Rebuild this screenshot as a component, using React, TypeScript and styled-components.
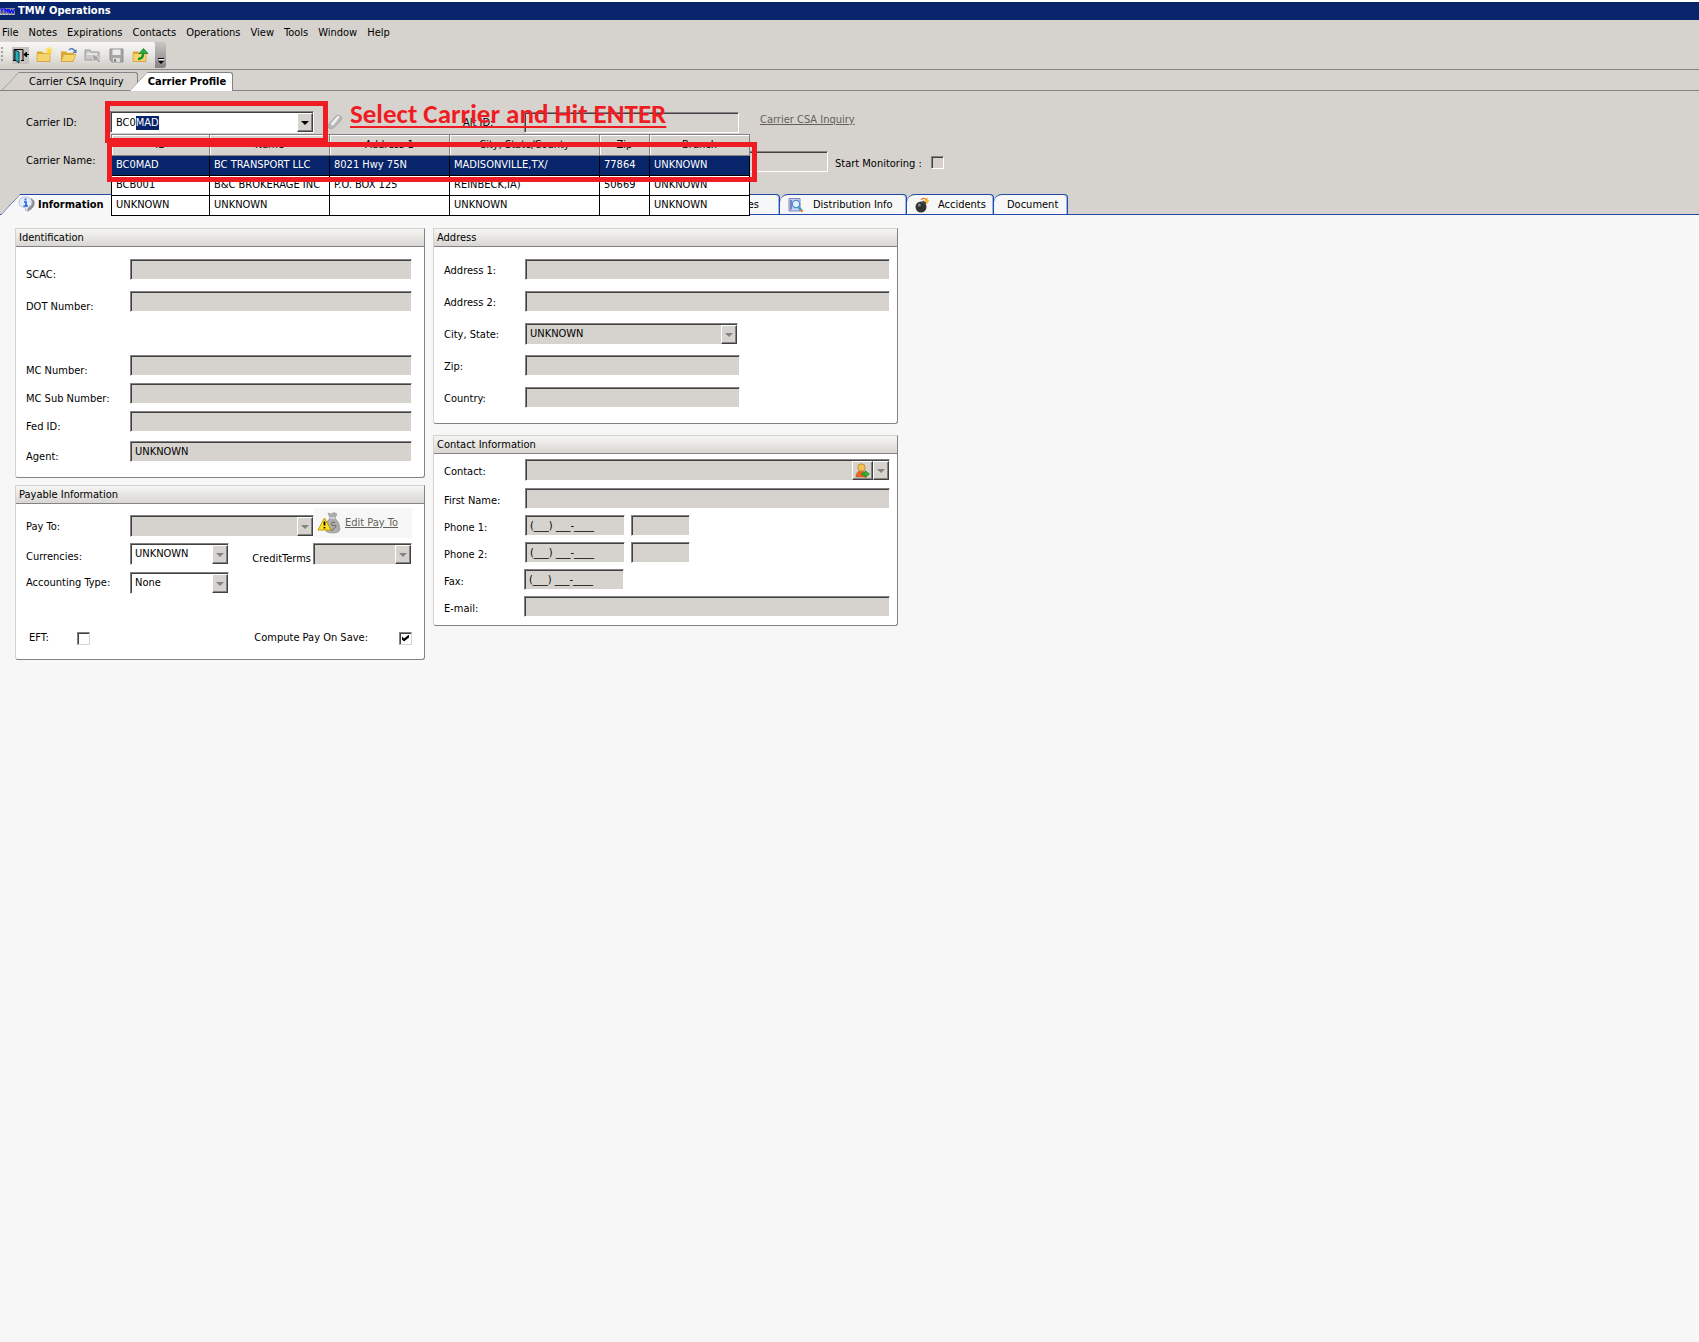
import React, { useEffect, useRef } from 'react';
import styled, { createGlobalStyle, css } from 'styled-components';

const color = {
  face: '#d6d3ce',
  page: '#f7f7f7',
  navy: '#08246b',
  shadow: '#848284',
  dark: '#424142',
  red: '#ef1c23',
  blue: '#2149a5',
};

const GlobalStyle = createGlobalStyle`
  * { box-sizing: border-box; }
  html { background: ${color.page}; }
  body {
    margin: 0;
    background: ${color.page};
    color: #000;
    font: 11px/14px "DejaVu Sans Condensed", "DejaVu Sans", Tahoma, sans-serif;
  }
  button, input, select { font: inherit; color: inherit; margin: 0; }
`;

const Shell = styled.div`
  display: flex;
  flex-direction: column;
  min-height: 100vh;
`;

const TitleBar = styled.header`
  display: flex;
  align-items: center;
  gap: 3px;
  height: 20px;
  border-top: 2px solid #fff;
  background: ${color.navy};
  color: #fff;
  font-weight: bold;
`;

const MenuBar = styled.nav`
  display: flex;
  align-items: center;
  gap: 10px;
  height: 22px;
  padding: 4px 0 0 2px;
  background: ${color.face};
`;

const MenuItem = styled.button`
  padding: 0;
  border: 0;
  background: none;
`;

const ToolBar = styled.div`
  display: flex;
  height: 28px;
  border-bottom: 1px solid ${color.shadow};
  background: ${color.face};
`;

const ToolStrip = styled.div`
  display: flex;
  align-items: center;
  gap: 4px;
  height: 26px;
  padding: 0 5px 0 1px;
  border-radius: 0 3px 0 0;
  background: linear-gradient(#f7f7f5, #e8e6e2 50%, #d0cdc6);
`;

const Grip = styled.span`
  width: 2px;
  height: 16px;
  margin-right: 3px;
  background: repeating-linear-gradient(#a5a29c 0 2px, transparent 2px 4px);
`;

const ToolButton = styled.button`
  display: grid;
  place-items: center;
  width: 20px;
  height: 20px;
  padding: 0;
  border: 0;
  background: none;
`;

const Overflow = styled.button`
  display: flex;
  align-items: flex-end;
  justify-content: center;
  width: 11px;
  height: 26px;
  padding: 0 0 3px;
  border: 0;
  border-radius: 0 3px 3px 0;
  background: linear-gradient(#c8c6c2, #848284);
`;

const DocTabs = styled.div`
  display: flex;
  align-items: flex-end;
  height: 21px;
  background: linear-gradient(${color.shadow}, ${color.shadow}) bottom / 100% 1px no-repeat ${color.face};
`;

const SlantTab = styled.button<{ $line: string; $fill: string; $active?: boolean }>`
  position: relative;
  isolation: isolate;
  display: flex;
  align-items: center;
  gap: 3px;
  height: 19px;
  padding: 1px 14px 0 29px;
  border: 0;
  background: none;
  white-space: nowrap;
  font-weight: ${p => (p.$active ? 'bold' : 'normal')};
  & + & { margin-left: -10px; padding: 1px 7px 0 20px; }

  &::before, &::after {
    content: "";
    position: absolute;
    z-index: -1;
    top: 0;
    bottom: ${p => (p.$active ? 0 : 1)}px;
    border-top: 1px solid ${p => p.$line};
    background: ${p => p.$fill};
  }
  &::before {
    left: 10px;
    width: 20px;
    border-left: 1px solid ${p => p.$line};
    border-top-left-radius: 2px;
    transform: skewX(-43deg);
  }
  &::after {
    left: 20px;
    right: 0;
    border-right: 1px solid ${p => p.$line};
    border-top-right-radius: 3px;
  }
`;

const InfoTab = styled(SlantTab)`
  width: 124px;
  height: 21px;
  padding: 0 0 0 18px;
`;

const Header = styled.section`
  position: relative;
  padding-top: 20px;
  background: ${color.face};
`;

const HeaderRow = styled.div<{ $align?: string }>`
  display: flex;
  align-items: ${p => p.$align || 'center'};
  padding-left: 26px;
  & + & { margin-top: 18px; }
`;

const HeaderLabel = styled.label`
  flex: none;
  width: 84px;
  padding-top: 2px;
  line-height: 16px;
`;

const AltLabel = styled.label`
  width: 61px;
  margin-left: 120px;
  padding-top: 2px;
  line-height: 16px;
`;

const sunken = css`
  border: 1px solid;
  border-color: ${color.shadow} #fff #fff ${color.shadow};
  border-radius: 0;
  box-shadow: inset 1px 1px ${color.dark};
  outline: none;
`;

const TextBox = styled.input<{ $w?: string }>`
  ${sunken}
  display: block;
  width: ${p => p.$w || '100%'};
  height: 21px;
  padding: 0 5px 1px 4px;
  background: ${color.face};
`;

const HeaderLink = styled.a`
  align-self: flex-start;
  margin-left: 21px;
  color: #63615a;
  line-height: 18px;
`;

const HeaderMonitor = styled.label`
  width: 96px;
  margin-left: 7px;
  padding-top: 5px;
  line-height: 16px;
  white-space: nowrap;
`;

const Combo = styled.div<{ $w?: string; $white?: boolean }>`
  ${sunken}
  display: flex;
  flex: none;
  width: ${p => p.$w || '100%'};
  height: 22px;
  padding: 1px 0 0 1px;
  background: ${p => (p.$white ? '#fff' : color.face)};
`;

const ComboInput = styled.input`
  flex: 1;
  min-width: 0;
  padding: 0 0 0 4px;
  border: 0;
  outline: 0;
  background: none;
  &::selection { background: ${color.navy}; color: #fff; }
`;

const ComboSelect = styled.select`
  appearance: none;
  flex: 1;
  min-width: 0;
  padding: 0 0 1px 3px;
  border: 0;
  background: none;
`;

const DropButton = styled.button<{ $w?: number }>`
  display: grid;
  place-items: center;
  width: ${p => p.$w || 16}px;
  padding: 0;
  border: 1px solid;
  border-color: #fff ${color.dark} ${color.dark} #fff;
  background: ${color.face};
  box-shadow: inset -1px -1px ${color.shadow};
`;

const Arrow = styled.span<{ $off?: boolean }>`
  border: 4px solid transparent;
  border-top-color: ${p => (p.$off ? color.shadow : '#000')};
  border-bottom: 0;
`;

const Eraser = styled.button`
  width: 16px;
  height: 16px;
  margin-left: 13px;
  padding: 0;
  border: 0;
  background: none;
`;

const DropList = styled.table`
  position: absolute;
  z-index: 2;
  top: 43px;
  left: 111px;
  width: 638px;
  border-collapse: collapse;
  table-layout: fixed;
  background: #fff;
  border: 1px solid #000;
  th, td {
    height: 20px;
    padding: 0 0 2px 4px;
    border: 1px solid #000;
    font-weight: normal;
    text-align: left;
    white-space: nowrap;
    overflow: hidden;
  }
  th {
    padding: 0;
    height: 21px;
    background: ${color.face};
    border-color: ${color.shadow};
    box-shadow: inset 1px 1px #fff;
    text-align: center;
  }
`;

const ListRow = styled.tr<{ $selected?: boolean }>`
  background: ${p => (p.$selected ? color.navy : '#fff')};
  color: ${p => (p.$selected ? '#fff' : '#000')};
`;

const RedBox = styled.div<{ $x: number; $y: number; $w: number; $h: number }>`
  position: absolute;
  z-index: 3;
  left: ${p => p.$x}px;
  top: ${p => p.$y}px;
  width: ${p => p.$w}px;
  height: ${p => p.$h}px;
  border: 5px solid ${color.red};
  pointer-events: none;
`;

const RedNote = styled.div`
  position: absolute;
  z-index: 3;
  left: 350px;
  top: 8px;
  color: ${color.red};
  font: bold 27px/30px Carlito, Lato, sans-serif;
  text-decoration: underline;
  text-decoration-thickness: 2px;
  text-underline-offset: 3px;
  white-space: nowrap;
  pointer-events: none;
`;

const PageTabs = styled.div`
  display: flex;
  height: 21px;
  margin-top: 22px;
  background: linear-gradient(${color.blue}, ${color.blue}) bottom / 100% 1px no-repeat;
`;

const PageTab = styled.button<{ $w: number; $pad?: number; $end?: boolean }>`
  display: flex;
  align-items: center;
  justify-content: ${p => (p.$end ? 'flex-end' : 'flex-start')};
  gap: 9px;
  width: ${p => p.$w}px;
  padding: 0 ${p => (p.$end ? 20 : 0)}px 0 ${p => p.$pad || 8}px;
  border: 1px solid ${color.blue};
  border-left-width: 0;
  border-radius: 8px 4px 0 0;
  background: ${color.page};
  box-shadow: inset -1px 0 #9cb6ef;
  white-space: nowrap;
`;

const Body = styled.main`
  display: grid;
  grid-template-columns: 410px 465px;
  align-items: start;
  gap: 8px;
  padding: 13px 15px;
`;

const Column = styled.div<{ $gap: number }>`
  display: grid;
  gap: ${p => p.$gap}px;
`;

const Panel = styled.fieldset<{ $pad: number }>`
  min-width: 0;
  margin: 0;
  padding: 0 0 ${p => p.$pad}px;
  border: 1px solid;
  border-color: ${color.face} ${color.shadow} ${color.shadow} ${color.face};
  border-radius: 0 0 3px 3px;
  background: #fff;
`;

const PanelTitle = styled.legend`
  float: left;
  width: 100%;
  height: 18px;
  padding: 0 3px;
  border-bottom: 1px solid ${color.shadow};
  background: linear-gradient(#f5f5f3, #d9d7d3);
  line-height: 17px;
`;

const Rows = styled.div<{ $top: number; $side: number }>`
  clear: both;
  padding: ${p => p.$top}px ${p => p.$side}px 0 10px;
`;

const Row = styled.div<{ $h: number; $label: number }>`
  display: grid;
  grid-template-columns: ${p => p.$label}px 1fr;
  height: ${p => p.$h}px;
`;

const Label = styled.label<{ $drop: number }>`
  padding-top: ${p => p.$drop}px;
  white-space: nowrap;
`;

const Cells = styled.div`
  display: flex;
  gap: 6px;
  align-items: flex-start;
`;

const EditPay = styled.div`
  display: flex;
  align-items: center;
  gap: 4px;
  flex: 1;
  height: 30px;
  margin: -7px 0 0 -6px;
  padding-left: 3px;
  background: ${color.page};
  a { color: #63615a; white-space: nowrap; }
`;

const Split = styled.div`
  display: flex;
  justify-content: space-between;
`;

const TermsPair = styled.div`
  display: flex;
  gap: 2px;
`;

const CheckLine = styled.div`
  display: flex;
  justify-content: space-between;
  align-items: center;
  padding-left: 3px;
`;

const CheckLabel = styled.label<{ $gap: number }>`
  display: flex;
  align-items: center;
  gap: ${p => p.$gap}px;
`;

const Check = styled.input<{ $grey?: boolean }>`
  ${sunken}
  appearance: none;
  display: grid;
  place-items: center;
  width: 13px;
  height: 13px;
  background: ${p => (p.$grey ? '#d9cfcb' : '#fff')};
  ${p => !p.$grey && `border-color: ${color.shadow} ${color.face} ${color.face} ${color.shadow};`}
  &:checked::before {
    content: "";
    width: 7px;
    height: 7px;
    background: #000;
    clip-path: polygon(0 29%, 29% 57%, 100% 0, 100% 43%, 29% 100%, 0 71%);
  }
`;

const MonitorCheck = styled(Check)`
  margin-top: 5px;
`;

const Folder = ({ open }: { open?: boolean }) => (
  <>
    <path d="M1 4.500h5l1.500 1.500H14V14.500H1z" fill="#e0a52c" />
    <path d={open ? 'M3.500 7.500H16L13 14.500H1z' : 'M1 6.500H14V14.500H1z'} fill="#f6d46c" stroke="#c99428" strokeWidth=".6" />
  </>
);

const ToolIcon = ({ kind }: { kind: string }) => (
  <svg width="17" height="17" viewBox="0 0 17 17">
    {kind === 'exit' && (
      <>
        <rect width="17" height="17" fill="#c6c3be" />
        <path d="M2 13V2.500h9V13M1 13.500h4M9 13.500h3" fill="none" stroke="#000" />
        <path d="M3 3l4 2v11l-4-3z" fill="#18b5bd" stroke="#000" strokeWidth=".7" />
        <path d="M17 7.500h-5M14.500 5v5M12 7.500l2-2v4z" stroke="#000" />
      </>
    )}
    {kind === 'new' && (
      <>
        <Folder />
        <path d="M13 0v8M9 4h8M10.200 1.200l5.600 5.600M15.800 1.200l-5.600 5.600" stroke="#ffd93b" strokeWidth="1.100" />
      </>
    )}
    {kind === 'open' && (
      <>
        <Folder open />
        <path d="M9 3q3-3 6 1" fill="none" stroke="#4c78b5" strokeWidth="1.300" />
        <path d="M16.500 2v4h-4z" fill="#4c78b5" />
      </>
    )}
    {kind === 'find' && (
      <>
        <path d="M1 3h5l1.500 2H15v8H1z" fill="#c9c9c9" stroke="#999" />
        <path d="M3 7h10" stroke="#e6e6e6" strokeWidth="2" />
        <path d="M8 7l2 8 2-2 3 3 1.500-1.500-3-3 2-1z" fill="#a3a3a3" stroke="#eee" strokeWidth=".6" />
      </>
    )}
    {kind === 'save' && (
      <>
        <path d="M2 2h13v13H4l-2-2z" fill="#a6a6a6" stroke="#8f8f8f" />
        <path d="M4.500 2.500h8V8h-8z" fill="#ececec" />
        <path d="M5 11h7v4H5z" fill="#dcdcdc" />
        <path d="M6 12h2v3H6z" fill="#848484" />
      </>
    )}
    {kind === 'up' && (
      <>
        <Folder />
        <path d="M6 12q5 0 5-5" fill="none" stroke="#16942c" strokeWidth="2.400" />
        <path d="M7 6.500l4.500-5 4.500 5z" fill="#28b13c" stroke="#0c7a20" strokeWidth=".7" />
      </>
    )}
  </svg>
);

const LogoIcon = () => (
  <svg width="15" height="9" viewBox="0 0 15 9">
    <rect y="1" width="15" height="7" fill="#8c8c94" />
    <path d="M0 2h4M2 2v4M5 6V2l2 2 1-2v4M9 2l1 4 1.500-3L13 6l1.500-4" fill="none" stroke="#1010ff" strokeWidth="1.200" />
    <path d="M0 7.500h15" stroke="#c6c6ce" strokeDasharray="2 1" />
  </svg>
);

const EraserIcon = () => (
  <svg width="16" height="16" viewBox="0 0 16 16">
    <path d="M1.500 10.500L8.500 2.500q2.500-2 5-.5t0 5L7 13.500q-3 2-5 .5t-.5-3.500z" fill="#b9b9b9" stroke="#989898" strokeWidth=".7" />
    <path d="M3.500 10l6.500-7.500q1.500-1 3 0L6 11.500z" fill="#f1f1f1" />
  </svg>
);

const InfoIcon = () => (
  <svg width="17" height="17" viewBox="0 0 17 17">
    <path d="M9 16l4-2.500q5-4 3-9L13 2" fill="#8d8d93" />
    <path d="M8 15l-1-3.500Q1 11 1 6.500 1.500 1 7.500 1T14 6.500q0 3-3 4.500z" fill="#e4ecfa" stroke="#a9b4c8" strokeWidth=".8" />
    <path d="M7.500 2.500v2M6 6h2v4M5.500 10h4.500" fill="none" stroke="#1d62e0" strokeWidth="1.600" />
  </svg>
);

const DistributionIcon = () => (
  <svg width="16" height="16" viewBox="0 0 16 16">
    <path d="M1 1.500h11v12.500H1z" fill="#c5cff2" stroke="#7c8ac0" />
    <path d="M3 3v9.500" stroke="#7385c8" strokeWidth="2" />
    <circle cx="8" cy="7" r="3.700" fill="#dff1ff" stroke="#5a87c4" strokeWidth="1.300" />
    <path d="M10.500 10l3 3.500" stroke="#2fa4c9" strokeWidth="2.600" />
    <path d="M12.800 13l1.700 1.800" stroke="#e0762a" strokeWidth="2.200" />
  </svg>
);

const BombIcon = () => (
  <svg width="14" height="16" viewBox="0 0 14 16">
    <circle cx="6" cy="10" r="5.500" fill="#333" />
    <path d="M8 3.500l3.500 2-1.500 2.500-3.500-2z" fill="#444" />
    <circle cx="4.300" cy="8" r="1.500" fill="#888" />
    <path d="M6 3q2-3 5-.5l1 2" fill="none" stroke="#f08024" strokeWidth="1.300" />
    <path d="M12 1v6M9.500 4H14" stroke="#f7b52c" strokeWidth="1.300" />
  </svg>
);

const MoneyIcon = () => (
  <svg width="24" height="22" viewBox="0 0 24 22">
    <path d="M11 1l3 1 3-1.500 3 1.500-2 4q5 5 5 11 0 4-7.500 4T8 17q0-6 5-11z" fill="#adadad" stroke="#8f8f8f" strokeWidth=".6" />
    <path d="M13 6h5" stroke="#e2e2e2" strokeWidth="1.300" />
    <path d="M18 10.500q-3-1.500-3.500 1t3 2-.5 3.200-3.500-.5" fill="none" stroke="#666" />
    <path d="M7.500 6L14 18H1z" fill="#ffe326" stroke="#c79a00" strokeLinejoin="round" />
    <path d="M7.500 9.500v4M7.500 15v1.500" stroke="#000" strokeWidth="1.700" />
  </svg>
);

const PersonIcon = () => (
  <svg width="15" height="15" viewBox="0 0 15 15">
    <path d="M1 14q0-6 5-6t6 6z" fill="#ee6422" stroke="#b94812" strokeWidth=".5" />
    <circle cx="6.500" cy="4.500" r="3.700" fill="#f3c257" stroke="#b57a1c" strokeWidth=".7" />
    <path d="M7 9.800h3V7.500l4.500 3.500-4.500 3.500v-2.300H7z" fill="#35b335" stroke="#16801a" strokeWidth=".6" />
  </svg>
);

const menus = ['File', 'Notes', 'Expirations', 'Contacts', 'Operations', 'View', 'Tools', 'Window', 'Help'];
const tools: [string, string][] = [
  ['exit', 'Exit'], ['new', 'New'], ['open', 'Open'], ['find', 'Find'], ['save', 'Save'], ['up', 'Up'],
];
const columns: [string, number][] = [
  ['ID', 98], ['Name', 120], ['Address 1', 120], ['City, State/County', 150], ['Zip', 50], ['Branch', 100],
];
const carriers = [
  ['BC0MAD', 'BC TRANSPORT LLC', '8021 Hwy 75N', 'MADISONVILLE,TX/', '77864', 'UNKNOWN'],
  ['BCB001', 'B&C BROKERAGE INC', 'P.O. BOX 125', 'REINBECK,IA)', '50669', 'UNKNOWN'],
  ['UNKNOWN', 'UNKNOWN', '', 'UNKNOWN', '', 'UNKNOWN'],
];
const identification: [string, string, number, string][] = [
  ['scac', 'SCAC:', 32, ''],
  ['dot', 'DOT Number:', 64, ''],
  ['mc', 'MC Number:', 28, ''],
  ['mc-sub', 'MC Sub Number:', 28, ''],
  ['fed', 'Fed ID:', 30, ''],
  ['agent', 'Agent:', 21, 'UNKNOWN'],
];
const phoneMask = '(___) ___-____';

function Picker({ id, value, width, white }: { id: string; value: string; width?: string; white?: boolean }) {
  return (
    <Combo $w={width} $white={white}>
      <ComboSelect id={id} defaultValue={value}>
        <option value={value}>{value}</option>
      </ComboSelect>
      <DropButton as="span" aria-hidden><Arrow $off /></DropButton>
    </Combo>
  );
}

function CarrierHeader() {
  const idRef = useRef<HTMLInputElement>(null);
  useEffect(() => {
    idRef.current?.focus();
    idRef.current?.setSelectionRange(3, 6);
  }, []);
  return (
    <Header>
      <HeaderRow>
        <HeaderLabel htmlFor="carrier-id">Carrier ID:</HeaderLabel>
        <Combo $w="204px" $white>
          <ComboInput id="carrier-id" ref={idRef} defaultValue="BC0MAD" />
          <DropButton aria-label="Show carriers"><Arrow /></DropButton>
        </Combo>
        <Eraser aria-label="Clear"><EraserIcon /></Eraser>
        <AltLabel htmlFor="alt-id">Alt ID:</AltLabel>
        <TextBox id="alt-id" $w="215px" />
        <HeaderLink href="#csa">Carrier CSA Inquiry</HeaderLink>
      </HeaderRow>
      <HeaderRow $align="flex-start">
        <HeaderLabel htmlFor="carrier-name">Carrier Name:</HeaderLabel>
        <TextBox id="carrier-name" $w="718px" />
        <HeaderMonitor htmlFor="monitor">Start Monitoring :</HeaderMonitor>
        <MonitorCheck type="checkbox" id="monitor" $grey />
      </HeaderRow>
      <DropList>
        <colgroup>{columns.map(([name, w]) => <col key={name} width={w} />)}</colgroup>
        <thead>
          <tr>{columns.map(([name]) => <th key={name}>{name}</th>)}</tr>
        </thead>
        <tbody>
          {carriers.map((row, i) => (
            <ListRow key={row[0]} $selected={i === 0}>
              {row.map((cell, j) => <td key={j}>{cell}</td>)}
            </ListRow>
          ))}
        </tbody>
      </DropList>
      <RedBox $x={105} $y={10} $w={223} $h={42} />
      <RedBox $x={107} $y={51} $w={650} $h={40} />
      <RedNote>Select Carrier and Hit ENTER</RedNote>
      <PageTabs>
        <InfoTab $line={color.blue} $fill={color.page} $active>
          <InfoIcon />Information
        </InfoTab>
        <PageTab $w={656} $end>es</PageTab>
        <PageTab $w={127}><DistributionIcon />Distribution Info</PageTab>
        <PageTab $w={87}><BombIcon />Accidents</PageTab>
        <PageTab $w={74} $pad={13}>Document</PageTab>
      </PageTabs>
    </Header>
  );
}

export default function App() {
  return (
    <Shell>
      <GlobalStyle />
      <TitleBar><LogoIcon />TMW Operations</TitleBar>
      <MenuBar>{menus.map(m => <MenuItem key={m}>{m}</MenuItem>)}</MenuBar>
      <ToolBar>
        <ToolStrip>
          <Grip />
          {tools.map(([kind, name]) => (
            <ToolButton key={kind} aria-label={name}><ToolIcon kind={kind} /></ToolButton>
          ))}
        </ToolStrip>
        <Overflow aria-label="More tools">
          <svg width="6" height="7" viewBox="0 0 6 7">
            <path d="M0 .5h6" stroke="#000" /><path d="M1 1.500h6" stroke="#fff" />
            <path d="M0 3h6L3 6z" />
          </svg>
        </Overflow>
      </ToolBar>
      <DocTabs>
        <SlantTab $line={color.shadow} $fill={color.face}>Carrier CSA Inquiry</SlantTab>
        <SlantTab $line={color.shadow} $fill="#fff" $active>Carrier Profile</SlantTab>
      </DocTabs>
      <CarrierHeader />
      <Body>
        <Column $gap={7}>
          <Panel $pad={15}>
            <PanelTitle>Identification</PanelTitle>
            <Rows $top={12} $side={12}>
              {identification.map(([id, name, h, value]) => (
                <Row key={id} $h={h} $label={104}>
                  <Label $drop={9} htmlFor={id}>{name}</Label>
                  <TextBox id={id} defaultValue={value} />
                </Row>
              ))}
            </Rows>
          </Panel>
          <Panel $pad={14}>
            <PanelTitle>Payable Information</PanelTitle>
            <Rows $top={11} $side={12}>
              <Row $h={28} $label={104}>
                <Label $drop={5} htmlFor="pay-to">Pay To:</Label>
                <Cells>
                  <Picker id="pay-to" value="" width="184px" />
                  <EditPay><MoneyIcon /><a href="#pay-to">Edit Pay To</a></EditPay>
                </Cells>
              </Row>
              <Row $h={29} $label={104}>
                <Label $drop={7} htmlFor="currency">Currencies:</Label>
                <Split>
                  <Picker id="currency" value="UNKNOWN" width="99px" white />
                  <TermsPair>
                    <Label $drop={9} htmlFor="terms">CreditTerms</Label>
                    <Picker id="terms" value="" width="99px" />
                  </TermsPair>
                </Split>
              </Row>
              <Row $h={59} $label={104}>
                <Label $drop={4} htmlFor="acct">Accounting Type:</Label>
                <Picker id="acct" value="None" width="99px" white />
              </Row>
              <CheckLine>
                <CheckLabel $gap={28}>EFT:<Check type="checkbox" /></CheckLabel>
                <CheckLabel $gap={31}>Compute Pay On Save:<Check type="checkbox" defaultChecked /></CheckLabel>
              </CheckLine>
            </Rows>
          </Panel>
        </Column>
        <Column $gap={11}>
          <Panel $pad={15}>
            <PanelTitle>Address</PanelTitle>
            <Rows $top={12} $side={7}>
              <Row $h={32} $label={81}><Label $drop={5} htmlFor="a1">Address 1:</Label><TextBox id="a1" /></Row>
              <Row $h={32} $label={81}><Label $drop={5} htmlFor="a2">Address 2:</Label><TextBox id="a2" /></Row>
              <Row $h={32} $label={81}><Label $drop={5} htmlFor="city">City, State:</Label><Picker id="city" value="UNKNOWN" width="213px" /></Row>
              <Row $h={32} $label={81}><Label $drop={5} htmlFor="zip">Zip:</Label><TextBox id="zip" $w="215px" /></Row>
              <Row $h={21} $label={81}><Label $drop={5} htmlFor="country">Country:</Label><TextBox id="country" $w="215px" /></Row>
            </Rows>
          </Panel>
          <Panel $pad={8}>
            <PanelTitle>Contact Information</PanelTitle>
            <Rows $top={5} $side={7}>
              <Row $h={29} $label={81}>
                <Label $drop={6} htmlFor="contact">Contact:</Label>
                <Combo>
                  <ComboInput id="contact" />
                  <DropButton $w={21} aria-label="Add contact"><PersonIcon /></DropButton>
                  <DropButton aria-label="Show contacts"><Arrow $off /></DropButton>
                </Combo>
              </Row>
              <Row $h={27} $label={81}><Label $drop={6} htmlFor="first">First Name:</Label><TextBox id="first" /></Row>
              <Row $h={27} $label={81}>
                <Label $drop={6} htmlFor="p1">Phone 1:</Label>
                <Cells>
                  <TextBox id="p1" $w="100px" defaultValue={phoneMask} />
                  <TextBox aria-label="Phone 1 extension" $w="59px" />
                </Cells>
              </Row>
              <Row $h={27} $label={81}>
                <Label $drop={6} htmlFor="p2">Phone 2:</Label>
                <Cells>
                  <TextBox id="p2" $w="100px" defaultValue={phoneMask} />
                  <TextBox aria-label="Phone 2 extension" $w="59px" />
                </Cells>
              </Row>
              <Row $h={27} $label={80}><Label $drop={6} htmlFor="fax">Fax:</Label><TextBox id="fax" $w="100px" defaultValue={phoneMask} /></Row>
              <Row $h={21} $label={80}><Label $drop={6} htmlFor="mail">E-mail:</Label><TextBox id="mail" /></Row>
            </Rows>
          </Panel>
        </Column>
      </Body>
    </Shell>
  );
}
